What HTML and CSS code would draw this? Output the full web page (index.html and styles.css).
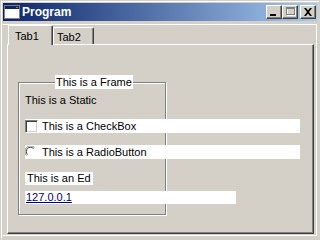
FILE: index.html
```html
<!DOCTYPE html>
<html lang="en">
<head>
<meta charset="utf-8">
  <title>Program</title>
  <link rel="stylesheet" href="styles.css">
</head>
<body>
  <div class="window">

    <!-- Title bar -->
    <div class="titlebar">
      <svg class="app-icon" width="16" height="16" viewBox="0 0 16 16">
        <rect x="0.5" y="1.5" width="15" height="13" fill="#fff" stroke="#808080"/>
        <rect x="1" y="2" width="14" height="3" fill="#0A246A"/>
        <rect x="12" y="3" width="2" height="1" fill="#E0603A"/>
      </svg>
      <span class="title">Program</span>
      <div class="caption-buttons">
        <div class="cap-btn">
          <svg width="14" height="12" viewBox="0 0 14 12"><rect x="3" y="8" width="6" height="2" fill="#000"/></svg>
        </div>
        <div class="cap-btn">
          <svg width="14" height="12" viewBox="0 0 14 12">
            <rect x="4.5" y="2.5" width="8" height="7" fill="none" stroke="#fff"/>
            <rect x="3.5" y="1.5" width="8" height="7" fill="none" stroke="#808080"/>
            <rect x="3" y="2" width="9" height="1" fill="#808080"/>
          </svg>
        </div>
        <div class="cap-btn close">
          <svg width="14" height="12" viewBox="0 0 14 12">
            <path d="M3 2h2l2 2.5 2-2.5h2l-3 4 3 4h-2l-2-2.5-2 2.5h-2l3-4z" fill="#000"/>
          </svg>
        </div>
      </div>
    </div>

    <!-- Client area -->
    <div class="client">
      <div class="tabs">
        <div class="tab active">Tab1</div>
        <div class="tab">Tab2</div>
      </div>
      <div class="panel">
        <div class="frame">
          <div class="frame-label">This is a Frame</div>
          <div class="static">This is a Static</div>
          <div class="option-row">
            <span class="checkbox"></span>This is a CheckBox
          </div>
          <div class="option-row">
            <svg class="radio" width="12" height="12" viewBox="0 0 12 12">
              <circle cx="6" cy="6" r="5.5" fill="#fff"/>
              <path d="M1.5 9.5A5 5 0 0 1 9.5 1.5" fill="none" stroke="#808080" stroke-width="1"/>
              <path d="M2.5 8.5A3.8 3.8 0 0 1 8.5 2.5" fill="none" stroke="#404040" stroke-width="1"/>
            </svg>This is a RadioButton
          </div>
          <div class="ed-label">This is an Ed</div>
          <div class="link-field"><a href="#">127.0.0.1</a></div>
        </div>
      </div>
    </div>

  </div>
</body>
</html>
```

FILE: styles.css
```css
/* Win2000 classic look */
body {
  margin: 0;
  font-family: "Liberation Sans", Arial, sans-serif;
  font-size: 11px;
  color: #000;
  background: #D4D0C8;
}
.window {
  width: 320px;
  height: 240px;
  box-sizing: border-box;
  padding: 2px;
  border: 1px solid #D4D0C8;
  box-shadow: inset 1px 1px 0 #fff;
  background: #D4D0C8;
}

/* Title bar */
.titlebar {
  height: 18px;
  display: flex;
  align-items: center;
  padding: 0 1px 0 1px;
  background: linear-gradient(to right, #0A246A, #A6CAF0);
}
.app-icon {
  margin-right: 2px;
}
.title {
  color: #fff;
  font-weight: bold;
  font-size: 12px;
}
.caption-buttons {
  margin-left: auto;
  display: flex;
}
.cap-btn {
  width: 16px;
  height: 14px;
  box-sizing: border-box;
  border: 1px solid;
  border-color: #fff #404040 #404040 #fff;
  box-shadow: inset -1px -1px 0 #808080;
  background: #D4D0C8;
  display: flex;
  align-items: center;
  justify-content: center;
}
.cap-btn.close {
  margin-left: 2px;
}

/* Client area with tab control */
.client {
  margin-top: 3px;
  height: 212px;
  box-sizing: border-box;
  border: 1px solid #fff;
  border-left: 0;
  padding: 0 1px 1px 4px;
}
.tabs {
  display: flex;
  align-items: flex-end;
  height: 19px;
  margin-left: 1px;
}
.tab {
  height: 17px;
  box-sizing: border-box;
  padding: 2px 0 0 3px;
  line-height: 14px;
  border-top: 1px solid #fff;
  border-left: 1px solid #fff;
  border-right: 1px solid #404040;
  border-radius: 2px 2px 0 0;
  box-shadow: inset -1px 0 0 #808080;
  width: 41px;
}
.tab.active {
  height: 20px;
  width: 45px;
  margin-bottom: -1px;
  padding: 3px 0 0 6px;
  position: relative;
  z-index: 1;
  background: #D4D0C8;
}
.panel {
  width: 307px;
  height: 190px;
  box-sizing: border-box;
  border: 1px solid;
  border-color: #fff #404040 #404040 #fff;
  box-shadow: inset -1px -1px 0 #808080;
  padding: 37px 0 0 10px;
}

/* Group box */
.frame {
  width: 148px;
  height: 133px;
  box-sizing: border-box;
  border: 1px solid #808080;
  box-shadow: inset 1px 1px 0 #fff, 1px 1px 0 #fff;
  padding: 0 0 0 6px;
}
.frame-label {
  width: fit-content;
  height: 14px;
  line-height: 14px;
  margin: -8px 0 0 30px;
  padding: 0 1px;
  background: #fff;
}
.static {
  height: 14px;
  line-height: 14px;
  margin-top: 4px;
}
.option-row {
  width: 275px;
  height: 14px;
  line-height: 14px;
  margin-top: 12px;
  background: #fff;
  display: flex;
  align-items: center;
  white-space: nowrap;
}
.checkbox {
  width: 13px;
  height: 13px;
  box-sizing: border-box;
  border: 1px solid;
  border-color: #808080 #fff #fff #808080;
  box-shadow: inset 1px 1px 0 #404040, inset -1px -1px 0 #D4D0C8;
  background: #fff;
  margin-right: 4px;
}
.radio {
  margin-right: 5px;
}
.ed-label {
  width: fit-content;
  height: 13px;
  line-height: 13px;
  margin-top: 13px;
  padding: 0 2px;
  background: #fff;
}
.link-field {
  width: 211px;
  height: 13px;
  line-height: 13px;
  margin-top: 6px;
  background: #fff;
}
.link-field a {
  color: #000080;
  padding-left: 1px;
}
```
